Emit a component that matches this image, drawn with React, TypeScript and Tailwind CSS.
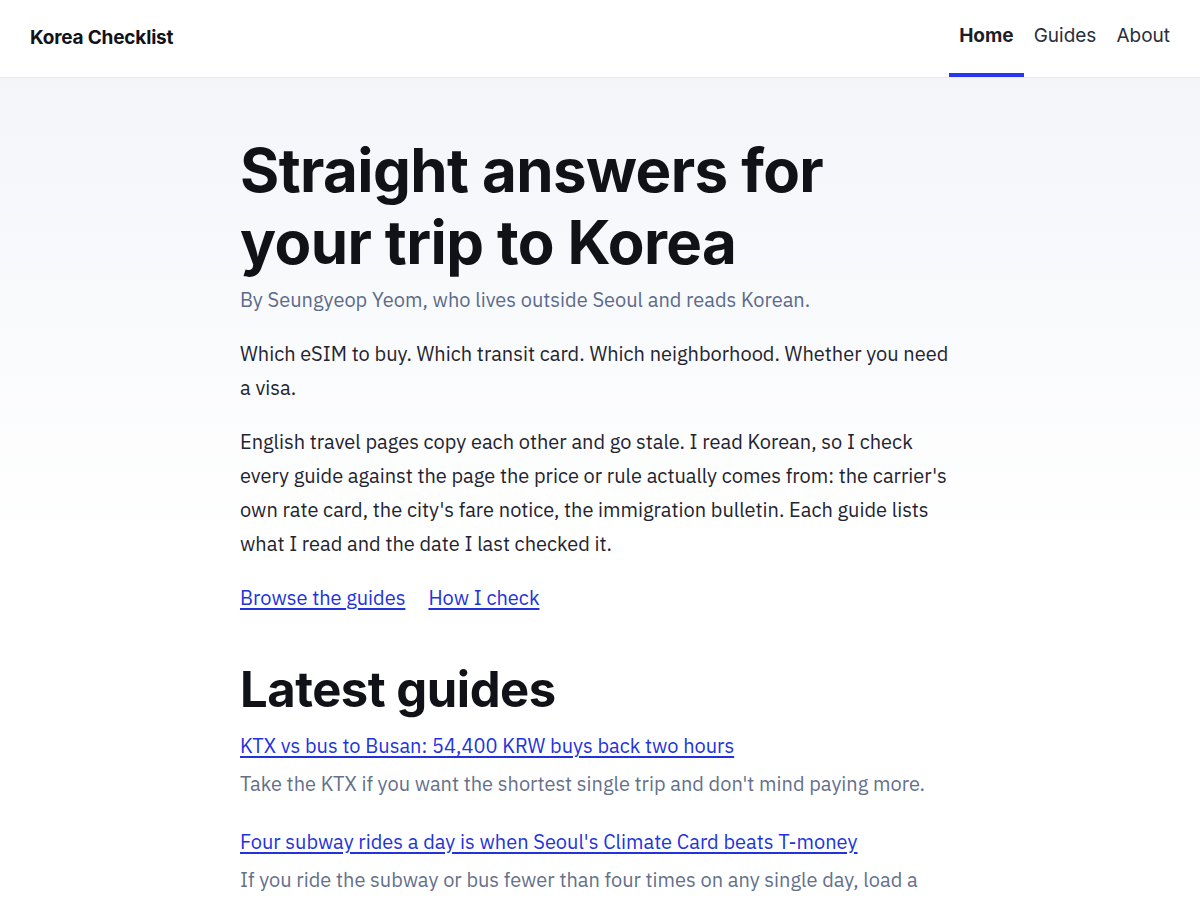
import React from "react";

const body = { fontFamily: '"IBM Plex Sans", "Noto Sans", sans-serif' } as const;
const head = { fontFamily: 'Inter, "Noto Sans", sans-serif' } as const;

export default function App() {
  return (
    <div className="min-h-[900px] bg-white text-[#1f2430]" style={body}>
      <header className="h-[78px] bg-white border-b border-[#e6e9ef] flex items-center justify-between pl-[30px] pr-[20px] shadow-[0_1px_3px_rgba(16,24,40,0.06)]" style={head}>
        <div className="text-[19px] font-bold tracking-[-0.01em] text-[#111318]">Korea Checklist</div>
        <nav className="flex h-full items-stretch text-[19px]">
          <a className="relative flex items-center px-[10px] pb-[4px] font-bold text-[#1c1f28]">
            Home
            <span className="absolute left-0 right-0 bottom-0 h-[4px] bg-[#2a35ef]" />
          </a>
          <a className="flex items-center px-[10px] pb-[4px] text-[#2a2e38]">Guides</a>
          <a className="flex items-center px-[10px] pb-[4px] text-[#2a2e38]">About</a>
        </nav>
      </header>
      <main className="bg-gradient-to-b from-[#f3f5f9] to-white to-[480px] bg-no-repeat">
        <div className="mx-auto w-[720px] pt-[56px]">
          <h1 className="text-[60px] leading-[72px] font-bold tracking-[-0.01em] text-[#101218]" style={head}>
            Straight answers for your trip to Korea
          </h1>
          <p className="mt-[8px] text-[20px] leading-[28px] text-[#5b6b8b]">
            By Seungyeop Yeom, who lives outside Seoul and reads Korean.
          </p>
          <p className="mt-[23px] text-[20px] leading-[34px]">
            Which eSIM to buy. Which transit card. Which neighborhood. Whether you need a visa.
          </p>
          <p className="mt-[20px] text-[20px] leading-[34px]">
            English travel pages copy each other and go stale. I read Korean, so I check every guide against the page the price or rule actually comes from: the carrier's own rate card, the city's fare notice, the immigration bulletin. Each guide lists what I read and the date I last checked it.
          </p>
          <div className="mt-[20px] flex gap-[23px] text-[20px] leading-[34px]">
            <a className="text-[#2233dd] underline underline-offset-[3px]">Browse the guides</a>
            <a className="text-[#2233dd] underline underline-offset-[3px]">How I check</a>
          </div>
          <h2 className="mt-[46px] text-[49px] leading-[58px] font-bold tracking-[-0.01em] text-[#101218]" style={head}>
            Latest guides
          </h2>
          <ul className="mt-[13px]">
            <li>
              <a className="block text-[20px] leading-[28px] text-[#2233dd] underline underline-offset-[3px]">
                KTX vs bus to Busan: 54,400 KRW buys back two hours
              </a>
              <p className="mt-[10px] text-[20px] leading-[28px] text-[#64708c]">
                Take the KTX if you want the shortest single trip and don't mind paying more.
              </p>
            </li>
            <li className="mt-[30px]">
              <a className="block text-[20px] leading-[28px] text-[#2233dd] underline underline-offset-[3px]">
                Four subway rides a day is when Seoul's Climate Card beats T-money
              </a>
              <p className="mt-[10px] text-[20px] leading-[28px] text-[#64708c]">
                If you ride the subway or bus fewer than four times on any single day, load a regular T-money card instead.
              </p>
            </li>
          </ul>
        </div>
      </main>
    </div>
  );
}
